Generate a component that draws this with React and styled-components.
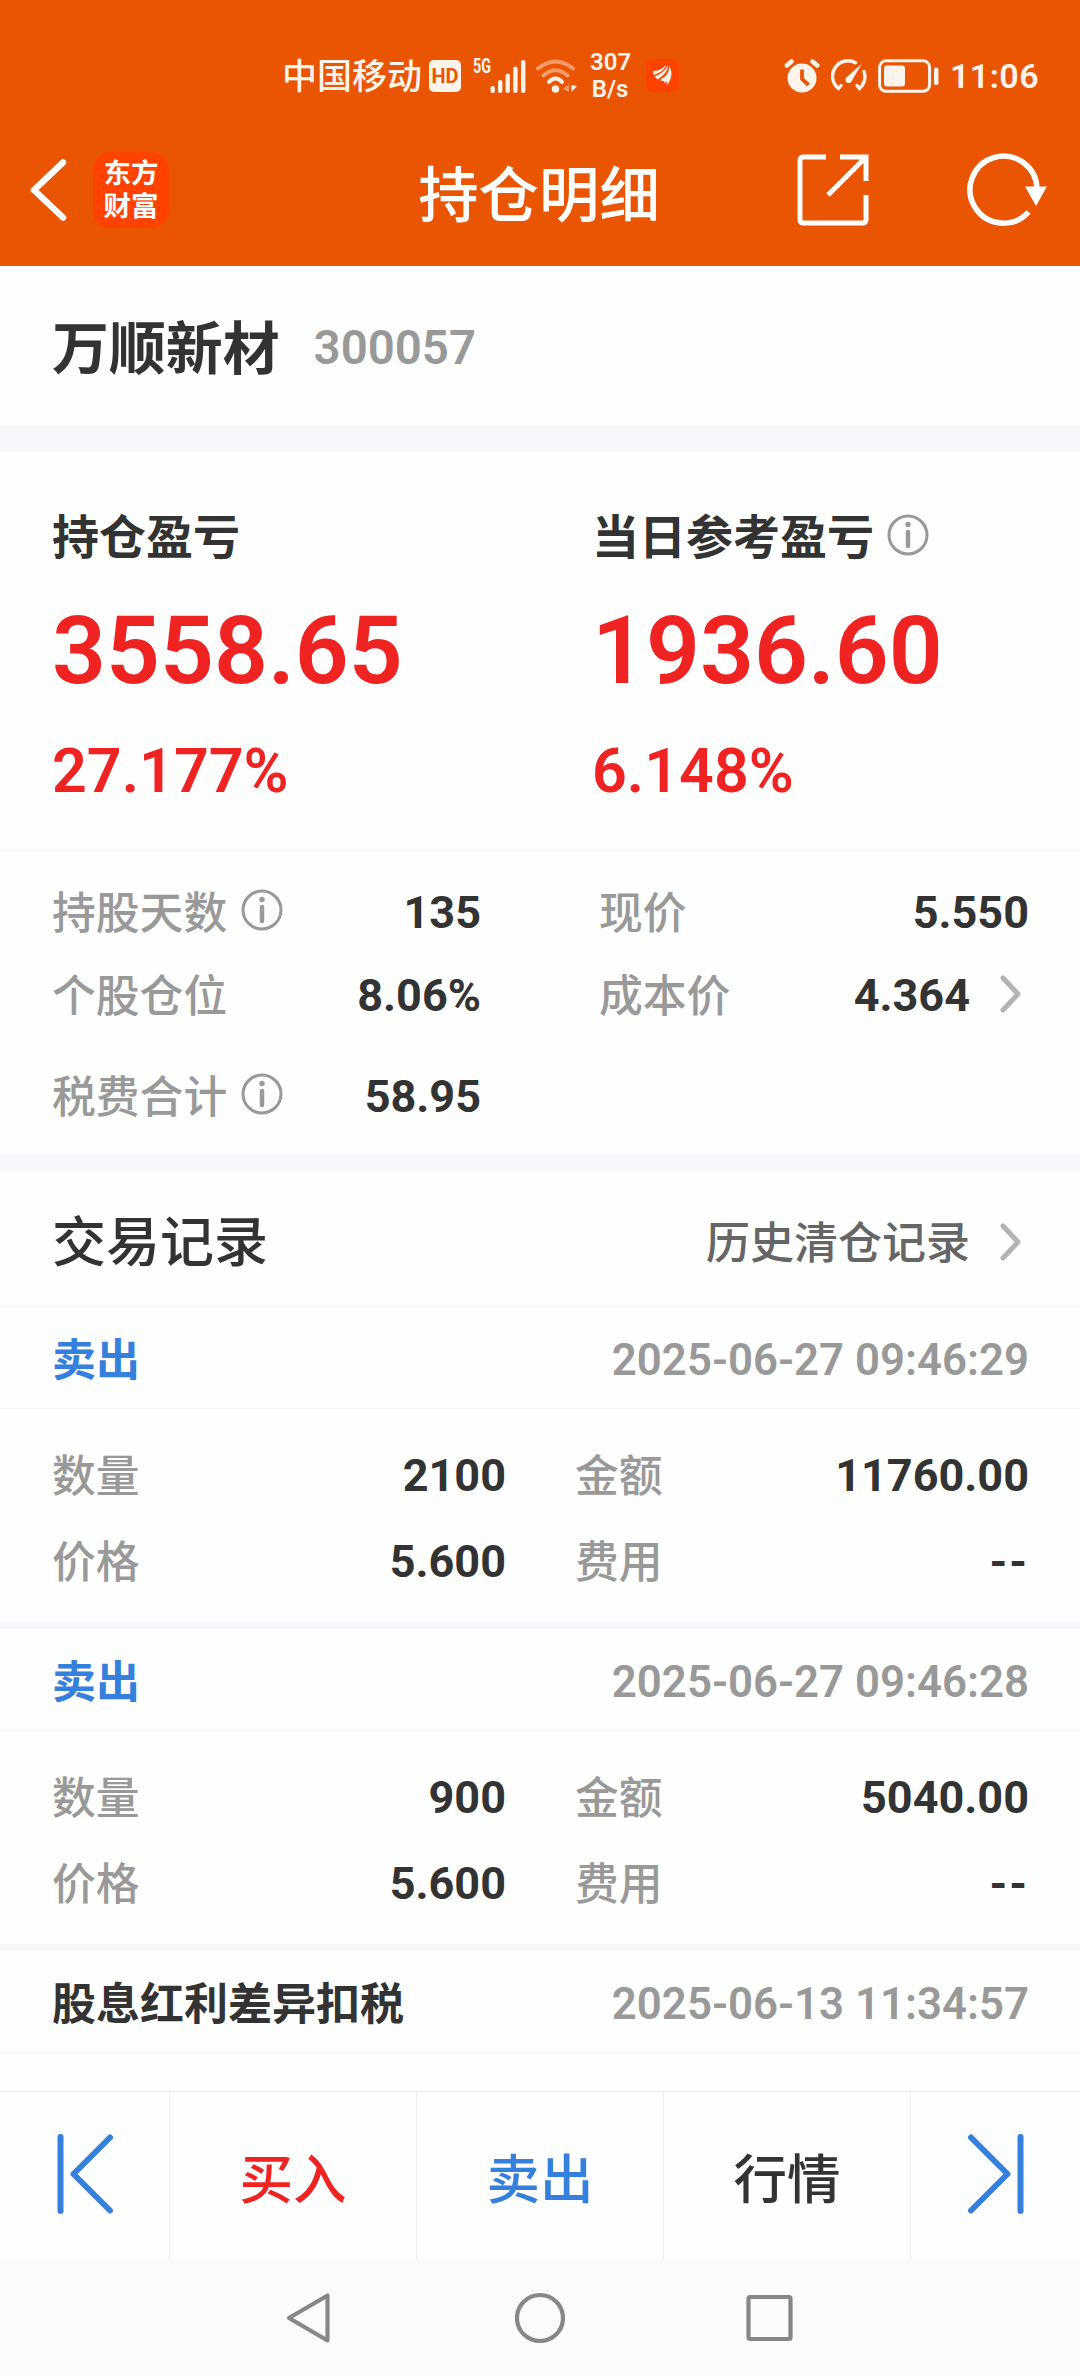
import React from 'react';
import styled, { createGlobalStyle } from 'styled-components';

const colors = {
  brand: '#ea5504',
  logo: '#ff4200',
  status: '#fff4ec',
  white: '#ffffff',
  ink: '#333333',
  mid: '#666666',
  grey: '#999999',
  chevron: '#b3b3b3',
  red: '#f02323',
  blue: '#3680dd',
  divider: '#f5f7fa',
  line: '#ededed',
};

const fonts = "Roboto, 'Noto Sans CJK SC', sans-serif";

const GlobalStyle = createGlobalStyle`
  * {
    box-sizing: border-box;
  }

  body {
    margin: 0;
    background: ${colors.white};
    font-family: ${fonts};
    color: ${colors.ink};
  }

  svg {
    display: block;
    flex-shrink: 0;
  }
`;

const Screen = styled.div`
  display: flex;
  flex-direction: column;
  width: 1080px;
  height: 2376px;
  overflow: hidden;
  white-space: nowrap;
  background: #fefefe;
`;

const Header = styled.header`
  flex-shrink: 0;
  height: 266px;
  background: ${colors.brand};
  color: ${colors.white};
`;

const StatusBar = styled.div`
  display: flex;
  justify-content: space-between;
  height: 113px;
  padding: 38px 42px 0 282px;
  color: ${colors.status};
`;

const StatusGroup = styled.div`
  display: flex;
  align-items: center;
`;

const StatusIcons = styled.div`
  display: flex;
  align-items: center;
  gap: ${({ $gap }) => $gap}px;
`;

const Carrier = styled.span`
  width: 147px;
  font-size: 35px;
  font-weight: 500;
  line-height: 40px;
  padding-top: 5px;
`;

const HdBadge = styled.span`
  width: 32px;
  height: 32px;
  margin-right: 12px;
  border-radius: 5px;
  background: ${colors.status};
  color: ${colors.brand};
  font-size: 20px;
  font-weight: 700;
  line-height: 32px;
  text-align: center;
`;

const Signal = styled.div`
  display: flex;
  align-items: flex-start;
`;

const NetworkType = styled.span`
  width: 18px;
  margin-right: -1px;
  font-size: 20px;
  font-weight: 700;
  line-height: 24px;
  transform: translateY(-4px) scaleX(0.72);
  transform-origin: left;
`;

const NetSpeed = styled.span`
  width: 40px;
  margin: 0 16px 0 12px;
  font-size: 24px;
  font-weight: 600;
  line-height: 27px;
  text-align: center;
`;

const Clock = styled.span`
  width: 88px;
  margin-left: 11px;
  font-size: 34px;
  font-weight: 600;
  line-height: 40px;
  letter-spacing: 0.4px;
`;

const NavBar = styled.div`
  display: grid;
  grid-template-columns: 1fr auto 1fr;
  align-items: center;
  height: 153px;
  padding: 0 32px 0 28px;
`;

const NavLeft = styled.div`
  display: flex;
  align-items: center;
  gap: 25px;
`;

const NavRight = styled.div`
  display: flex;
  align-items: center;
  justify-content: flex-end;
  gap: 97px;
`;

const Title = styled.h1`
  margin: 0;
  padding: 14px 0 0 2px;
  font-size: 60.4px;
  font-weight: 500;
  line-height: 80px;
`;

const BrandLogo = styled.div`
  display: flex;
  flex-direction: column;
  align-items: center;
  justify-content: center;
  width: 76px;
  height: 76px;
  border-radius: 18px;
  background: ${colors.logo};
  font-size: 27.5px;
  font-weight: 700;
  line-height: 33px;
`;

const StockRow = styled.section`
  display: flex;
  align-items: center;
  flex-shrink: 0;
  height: 159px;
  padding: 5px 52px 0;
`;

const StockName = styled.h2`
  margin: 0 34px 0 0;
  padding-top: 4px;
  font-size: 56.9px;
  font-weight: 700;
  line-height: 70px;
`;

const StockCode = styled.span`
  font-size: 47.4px;
  font-weight: 600;
  line-height: 70px;
  color: ${colors.grey};
`;

const Divider = styled.div`
  flex-shrink: 0;
  height: ${({ $size }) => $size}px;
  background: ${colors.divider};
`;

const Summary = styled.section`
  display: grid;
  grid-template-columns: 1fr 1fr;
  flex-shrink: 0;
  height: 399px;
  padding-top: 55px;
  border-bottom: 1px solid ${colors.divider};
`;

const SummaryItem = styled.div`
  padding-left: 52px;
`;

const SummaryLabel = styled.div`
  display: flex;
  align-items: center;
  gap: 13px;
  height: 60px;
  font-size: 47px;
  font-weight: 700;

  span {
    line-height: 60px;
    padding-top: 2px;
  }

  svg {
    margin-bottom: 5px;
  }
`;

const Amount = styled.div`
  margin-top: 29px;
  font-size: 94.5px;
  font-weight: 600;
  line-height: 110px;
  color: ${colors.red};
`;

const Percent = styled.div`
  margin-top: 30px;
  font-size: 61px;
  font-weight: 600;
  line-height: 70px;
  color: ${colors.red};
`;

const Stats = styled.section`
  display: grid;
  grid-template-columns: 429px 430px;
  grid-template-rows: 82px 84px 118px;
  column-gap: 118px;
  flex-shrink: 0;
  height: 303px;
  padding: 21px 51px 0 52px;
`;

const Field = styled.div`
  display: flex;
  align-items: center;
  height: ${({ $height }) => $height}px;
`;

const FieldLabel = styled.span`
  padding-top: 2px;
  font-size: 43.8px;
  font-weight: 450;
  line-height: 60px;
  color: ${colors.grey};
`;

const FieldIcon = styled.span`
  margin: 0 0 7px 14px;
`;

const FieldValue = styled.span`
  margin-left: auto;
  font-size: 45px;
  font-weight: 700;
  line-height: 60px;
  letter-spacing: ${({ $empty }) => ($empty ? '2px' : 'normal')};
`;

const FieldArrow = styled.span`
  margin: 0 7px 4px 28px;
`;

const SectionHead = styled.div`
  display: flex;
  align-items: center;
  justify-content: space-between;
  flex-shrink: 0;
  height: 136px;
  padding: 10px 51px 0 52px;
  border-bottom: 1px solid ${colors.divider};
`;

const SectionTitle = styled.h3`
  margin: 0;
  font-size: 54px;
  font-weight: 500;
  line-height: 70px;
`;

const HistoryLink = styled.a`
  display: flex;
  align-items: center;
  font-size: 44px;
  font-weight: 450;
  line-height: 60px;
  color: ${colors.mid};
`;

const Record = styled.article`
  flex-shrink: 0;
`;

const RecordHead = styled.div`
  display: flex;
  align-items: center;
  justify-content: space-between;
  height: 102px;
  padding: 5px 51px 0 52px;
  border-bottom: 1px solid ${colors.divider};
`;

const RecordType = styled.span`
  padding-top: 2px;
  font-size: 44px;
  font-weight: 700;
  line-height: 60px;
  color: ${({ $sell }) => ($sell ? colors.blue : colors.ink)};
`;

const RecordTime = styled.time`
  font-size: 43.8px;
  font-weight: 600;
  line-height: 60px;
  color: ${colors.grey};
`;

const RecordBody = styled.div`
  display: grid;
  grid-template-columns: 454px 454px;
  column-gap: 69px;
  align-content: start;
  height: 213px;
  padding: 24px 51px 0 52px;
`;

const ActionBar = styled.nav`
  display: flex;
  flex-shrink: 0;
  height: 169px;
  margin-top: auto;
  border-top: 1px solid ${colors.line};
`;

const Action = styled.button`
  display: flex;
  align-items: center;
  justify-content: center;
  flex: ${({ $side }) => ($side ? '0 0 170px' : '1 1 0')};
  margin: 0;
  padding: ${({ $side }) => ($side ? '0 0 5px' : '10px 0 0')};
  border: 0;
  border-right: 1px solid ${colors.line};
  background: none;
  font-family: inherit;
  font-size: 53.5px;
  font-weight: 500;
  line-height: 70px;
  color: ${({ $color }) => $color || colors.ink};

  &:last-child {
    flex-basis: 169px;
    border-right: 0;
  }
`;

const SystemBar = styled.div`
  display: flex;
  align-items: center;
  justify-content: center;
  gap: 180px;
  flex-shrink: 0;
  height: 116px;
  background: #fbfbfb;
`;

const SignalIcon = () => (
  <svg width="36" height="36" viewBox="17 0 36 36" fill={colors.status}>
    <rect x="17.5" y="28" width="4.4" height="7" rx="2.2" />
    <rect x="25" y="22" width="4.4" height="13" rx="2.2" />
    <rect x="32.5" y="15.5" width="4.4" height="19.5" rx="2.2" />
    <rect x="40.2" y="8.5" width="4.4" height="26.5" rx="2.2" />
    <rect x="48" y="2" width="4.4" height="33" rx="2.2" />
  </svg>
);

const WifiIcon = () => (
  <svg width="42" height="36" viewBox="0 0 42 36" fill="none" strokeLinecap="round">
    <path d="M2 10.5Q19.5 -3.5 37 10.5" stroke="#f69a68" strokeWidth="4" />
    <path d="M7.5 17.5Q19.5 7 31.5 17.5" stroke="#f69a68" strokeWidth="4" />
    <path d="M13 24Q19.5 17 26 24" stroke={colors.status} strokeWidth="4" />
    <circle cx="19.5" cy="31" r="3.7" fill={colors.status} />
    <path d="M33 26v8l-6-3z" fill="#f69a68" />
    <path d="M35.5 27l5.500 1-5.500 6z" fill={colors.status} />
  </svg>
);

const AppIcon = () => (
  <svg width="33" height="33" viewBox="0 0 33 33">
    <rect width="33" height="33" rx="7" fill={colors.logo} />
    <path
      d="M7 12C12 12 16 10 20 6 18.500 11 14 14 7.500 16z M8.500 17.500C15 15 19.500 12 21.500 6 22.500 12 17 17 11.500 20.500z M15 20C21 17 23.500 13 23 6.500 27 13 26 20 20.500 27 21.500 23 21 20.500 18.500 25 19 22 18 21 14.500 22z"
      fill={colors.status}
    />
  </svg>
);

const AlarmIcon = () => (
  <svg width="36" height="34" viewBox="0 0 36 34" fill="none">
    <circle cx="18" cy="19" r="14.5" fill={colors.status} />
    <path
      d="M2.8 6.5L7.5 2.5M33.2 6.5L28.5 2.5"
      stroke={colors.status}
      strokeWidth="4.5"
      strokeLinecap="round"
    />
    <path d="M18 10.5v9.500l6.500 6" stroke={colors.brand} strokeWidth="3.8" />
  </svg>
);

const GaugeIcon = () => (
  <svg width="36" height="33" viewBox="0 0 36 33" fill="none">
    <path
      d="M24.500 3.700A15.500 15.500 0 0 0 7.500 29.500l2.500-3M33 12.500A15.500 15.500 0 0 1 28.500 29.500l-2.500-3"
      stroke={colors.status}
      strokeWidth="3.4"
      strokeLinecap="round"
    />
    <path d="M31 4.500L21 21.500a3.400 3.400 0 1 1-4.500-4z" fill={colors.status} />
  </svg>
);

const BatteryIcon = () => (
  <svg width="61" height="34" viewBox="0 0 61 34" fill="none">
    <rect x="1.6" y="1.8" width="50" height="30.5" rx="6.5" stroke={colors.status} strokeWidth="3" />
    <rect x="6" y="6.500" width="21" height="21" rx="3" fill={colors.status} />
    <rect x="56" y="8.500" width="4.500" height="17.500" rx="2" fill={colors.status} />
  </svg>
);

const BackIcon = () => (
  <svg width="40" height="64" viewBox="0 0 40 64" fill="none">
    <path
      d="M35 4.500L6 32l29 27.500"
      stroke={colors.white}
      strokeWidth="6.5"
      strokeLinecap="round"
      strokeLinejoin="round"
    />
  </svg>
);

const ShareIcon = () => (
  <svg width="72" height="72" viewBox="0 0 72 72" fill="none" stroke={colors.white} strokeWidth="5">
    <path d="M29 3H6a3 3 0 0 0-3 3v60a3 3 0 0 0 3 3h60a3 3 0 0 0 3-3V41" />
    <path d="M43 3h26v24M68 4L31 41" />
  </svg>
);

const RefreshIcon = () => (
  <svg width="82" height="74" viewBox="0 0 82 74" fill="none">
    <path d="M71 36A33.500 33.500 0 1 0 62.500 59" stroke={colors.white} strokeWidth="5.5" />
    <path d="M59 33.500h22L70 53z" fill={colors.white} />
  </svg>
);

const InfoIcon = () => (
  <svg width="42" height="42" viewBox="0 0 42 42" fill="none">
    <circle cx="21" cy="21" r="19" stroke={colors.grey} strokeWidth="3" />
    <circle cx="21" cy="10.5" r="2.7" fill={colors.grey} />
    <path d="M21 18v14" stroke={colors.grey} strokeWidth="4.5" strokeLinecap="round" />
  </svg>
);

const ChevronIcon = () => (
  <svg width="24" height="40" viewBox="0 0 24 40" fill="none">
    <path
      d="M5 4l15 16L5 36"
      stroke={colors.chevron}
      strokeWidth="5"
      strokeLinecap="round"
      strokeLinejoin="round"
    />
  </svg>
);

const PrevIcon = () => (
  <svg width="60" height="84" viewBox="0 0 60 84" fill="none" stroke={colors.blue} strokeWidth="6">
    <path d="M5.500 5v74M55 5.500L18.500 42 55 78.500" strokeLinecap="round" strokeLinejoin="round" />
  </svg>
);

const NextIcon = () => (
  <svg width="60" height="84" viewBox="0 0 60 84" fill="none" stroke={colors.blue} strokeWidth="6">
    <path d="M54.500 5v74M5 5.500L41.500 42 5 78.500" strokeLinecap="round" strokeLinejoin="round" />
  </svg>
);

const SystemIcon = ({ children }) => (
  <svg
    width="50"
    height="52"
    viewBox="0 0 50 52"
    fill="none"
    stroke="#878787"
    strokeWidth="4.2"
    strokeLinejoin="round">
    {children}
  </svg>
);

const stats = [
  { label: '持股天数', value: '135', info: true, height: 82 },
  { label: '现价', value: '5.550', height: 82 },
  { label: '个股仓位', value: '8.06%', height: 84 },
  { label: '成本价', value: '4.364', arrow: true, height: 84 },
  { label: '税费合计', value: '58.95', info: true, height: 118 },
];

const records = [
  {
    type: '卖出',
    sell: true,
    time: '2025-06-27 09:46:29',
    fields: [['数量', '2100'], ['金额', '11760.00'], ['价格', '5.600'], ['费用', '--']],
  },
  {
    type: '卖出',
    sell: true,
    time: '2025-06-27 09:46:28',
    fields: [['数量', '900'], ['金额', '5040.00'], ['价格', '5.600'], ['费用', '--']],
  },
  { type: '股息红利差异扣税', time: '2025-06-13 11:34:57' },
];

const App = () => (
  <>
    <GlobalStyle />
    <Screen>
      <Header>
        <StatusBar>
          <StatusGroup>
            <Carrier>中国移动</Carrier>
            <HdBadge>HD</HdBadge>
            <StatusIcons $gap={10}>
              <Signal>
                <NetworkType>5G</NetworkType>
                <SignalIcon />
              </Signal>
              <WifiIcon />
            </StatusIcons>
            <NetSpeed>
              307
              <br />
              B/s
            </NetSpeed>
            <AppIcon />
          </StatusGroup>
          <StatusGroup>
            <StatusIcons $gap={11}>
              <AlarmIcon />
              <GaugeIcon />
              <BatteryIcon />
            </StatusIcons>
            <Clock>11:06</Clock>
          </StatusGroup>
        </StatusBar>
        <NavBar>
          <NavLeft>
            <BackIcon />
            <BrandLogo>
              <span>东方</span>
              <span>财富</span>
            </BrandLogo>
          </NavLeft>
          <Title>持仓明细</Title>
          <NavRight>
            <ShareIcon />
            <RefreshIcon />
          </NavRight>
        </NavBar>
      </Header>

      <StockRow>
        <StockName>万顺新材</StockName>
        <StockCode>300057</StockCode>
      </StockRow>
      <Divider $size={27} />

      <Summary>
        <SummaryItem>
          <SummaryLabel>
            <span>持仓盈亏</span>
          </SummaryLabel>
          <Amount>3558.65</Amount>
          <Percent>27.177%</Percent>
        </SummaryItem>
        <SummaryItem>
          <SummaryLabel>
            <span>当日参考盈亏</span>
            <InfoIcon />
          </SummaryLabel>
          <Amount>1936.60</Amount>
          <Percent>6.148%</Percent>
        </SummaryItem>
      </Summary>

      <Stats>
        {stats.map(({ label, value, info, arrow, height }) => (
          <Field key={label} $height={height}>
            <FieldLabel>{label}</FieldLabel>
            {info && (
              <FieldIcon>
                <InfoIcon />
              </FieldIcon>
            )}
            <FieldValue>{value}</FieldValue>
            {arrow && (
              <FieldArrow>
                <ChevronIcon />
              </FieldArrow>
            )}
          </Field>
        ))}
      </Stats>
      <Divider $size={17} />

      <SectionHead>
        <SectionTitle>交易记录</SectionTitle>
        <HistoryLink>
          历史清仓记录
          <FieldArrow>
            <ChevronIcon />
          </FieldArrow>
        </HistoryLink>
      </SectionHead>

      {records.map(({ type, sell, time, fields }) => (
        <Record key={time}>
          <RecordHead>
            <RecordType $sell={sell}>{type}</RecordType>
            <RecordTime>{time}</RecordTime>
          </RecordHead>
          {fields && (
            <>
              <RecordBody>
                {fields.map(([label, value]) => (
                  <Field key={label} $height={86}>
                    <FieldLabel>{label}</FieldLabel>
                    <FieldValue $empty={value === '--'}>{value}</FieldValue>
                  </Field>
                ))}
              </RecordBody>
              <Divider $size={7} />
            </>
          )}
        </Record>
      ))}

      <ActionBar>
        <Action $side>
          <PrevIcon />
        </Action>
        <Action $color={colors.red}>买入</Action>
        <Action $color={colors.blue}>卖出</Action>
        <Action>行情</Action>
        <Action $side>
          <NextIcon />
        </Action>
      </ActionBar>

      <SystemBar>
        <SystemIcon>
          <path d="M42.500 3.500v45L4 26z" />
        </SystemIcon>
        <SystemIcon>
          <circle cx="25" cy="26" r="23" />
        </SystemIcon>
        <SystemIcon>
          <rect x="3.5" y="5" width="42" height="42" rx="1.5" />
        </SystemIcon>
      </SystemBar>
    </Screen>
  </>
);

export default App;
